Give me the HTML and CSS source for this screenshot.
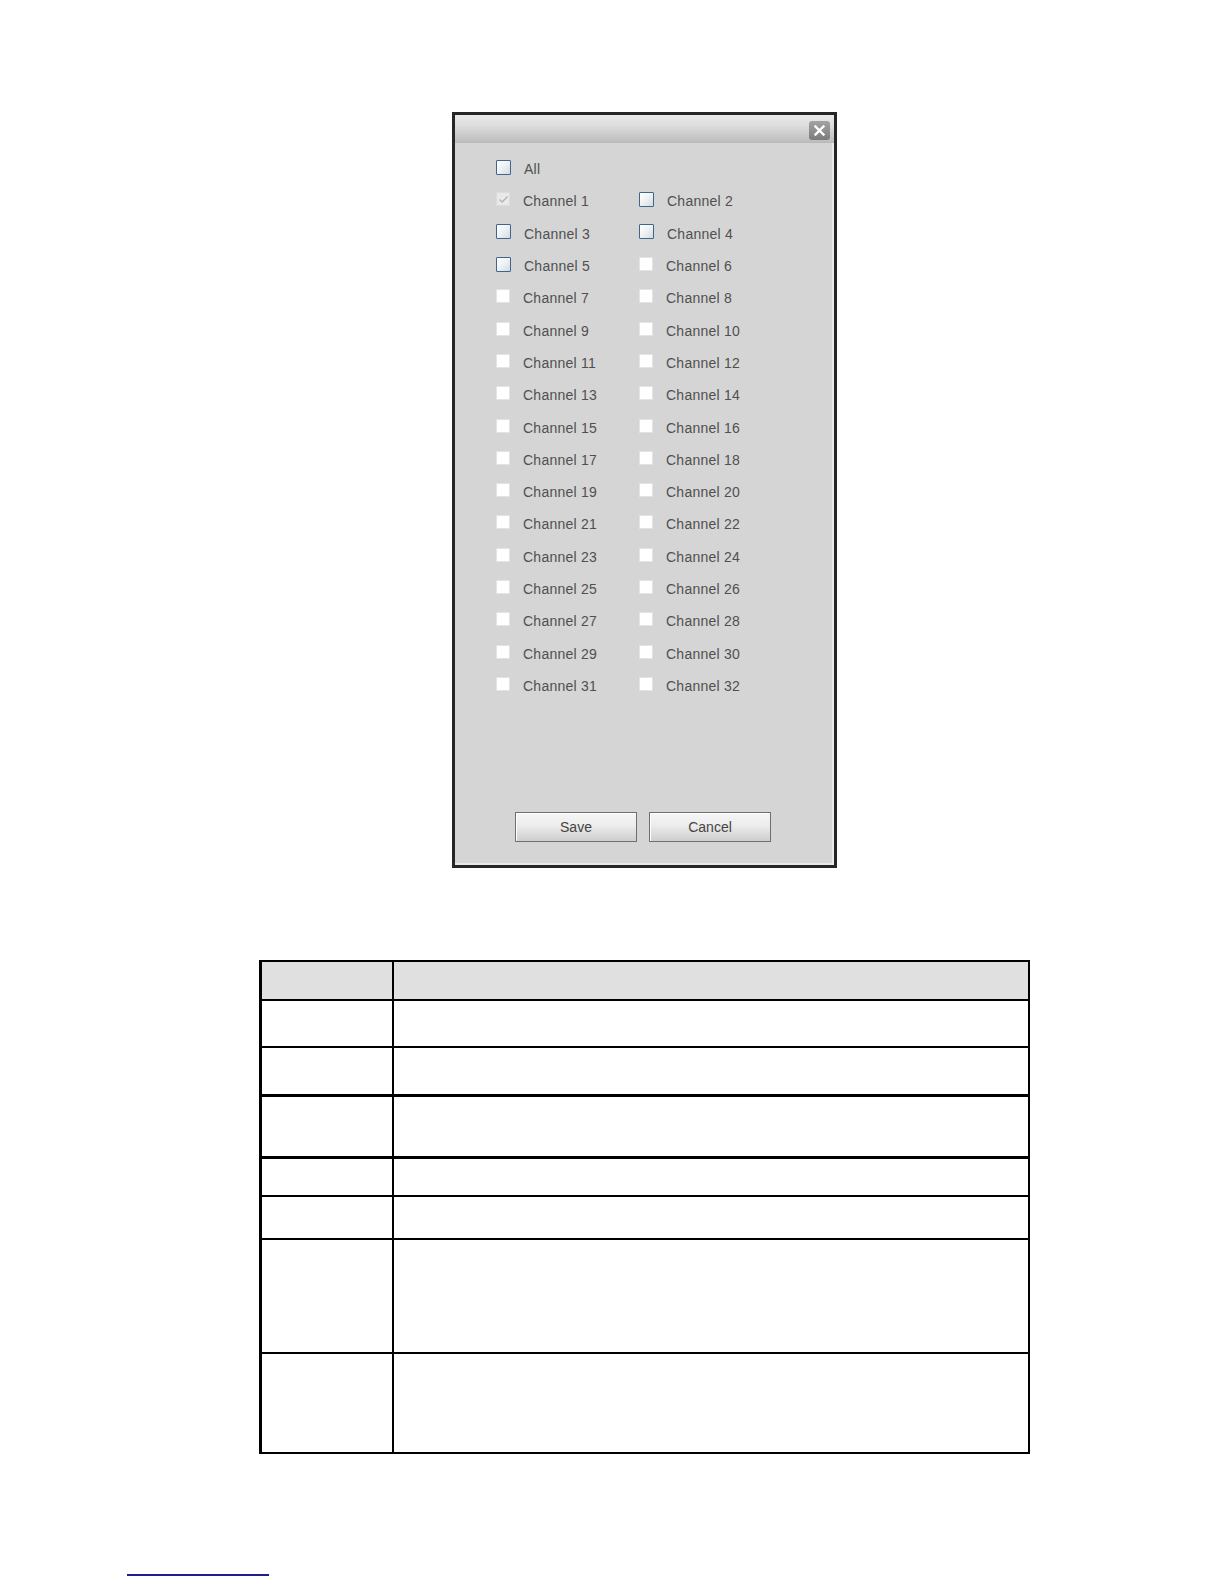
FILE: index.html
```html
<!DOCTYPE html>
<html>
<head>
<meta charset="utf-8">
<link rel="stylesheet" href="styles.css">
</head>
<body>
<div class="page">
  <div class="dialog">
    <div class="titlebar">
      <span class="close"><svg width="11" height="11" viewBox="0 0 11 11"><path d="M1.5 1.5 L9.5 9.5 M9.5 1.5 L1.5 9.5" stroke="#fff" stroke-width="2.4" stroke-linecap="square"/></svg></span>
    </div>
    <div class="body">
      <div class="grid">
        <label class="item"><span class="cb cb-blue"></span><span class="lbl">All</span></label>
        <span class="item"></span>
        <label class="item"><span class="cb cb-dis"><svg width="11" height="9" viewBox="0 0 11 9"><path d="M1.5 4.5 L4.2 7 L9.5 1.5" fill="none" stroke="#b4b4b4" stroke-width="1.4"/></svg></span><span class="lbl">Channel 1</span></label>
        <label class="item"><span class="cb cb-blue"></span><span class="lbl">Channel 2</span></label>
        <label class="item"><span class="cb cb-blue"></span><span class="lbl">Channel 3</span></label>
        <label class="item"><span class="cb cb-blue"></span><span class="lbl">Channel 4</span></label>
        <label class="item"><span class="cb cb-blue"></span><span class="lbl">Channel 5</span></label>
        <label class="item"><span class="cb"></span><span class="lbl">Channel 6</span></label>
        <label class="item"><span class="cb"></span><span class="lbl">Channel 7</span></label>
        <label class="item"><span class="cb"></span><span class="lbl">Channel 8</span></label>
        <label class="item"><span class="cb"></span><span class="lbl">Channel 9</span></label>
        <label class="item"><span class="cb"></span><span class="lbl">Channel 10</span></label>
        <label class="item"><span class="cb"></span><span class="lbl">Channel 11</span></label>
        <label class="item"><span class="cb"></span><span class="lbl">Channel 12</span></label>
        <label class="item"><span class="cb"></span><span class="lbl">Channel 13</span></label>
        <label class="item"><span class="cb"></span><span class="lbl">Channel 14</span></label>
        <label class="item"><span class="cb"></span><span class="lbl">Channel 15</span></label>
        <label class="item"><span class="cb"></span><span class="lbl">Channel 16</span></label>
        <label class="item"><span class="cb"></span><span class="lbl">Channel 17</span></label>
        <label class="item"><span class="cb"></span><span class="lbl">Channel 18</span></label>
        <label class="item"><span class="cb"></span><span class="lbl">Channel 19</span></label>
        <label class="item"><span class="cb"></span><span class="lbl">Channel 20</span></label>
        <label class="item"><span class="cb"></span><span class="lbl">Channel 21</span></label>
        <label class="item"><span class="cb"></span><span class="lbl">Channel 22</span></label>
        <label class="item"><span class="cb"></span><span class="lbl">Channel 23</span></label>
        <label class="item"><span class="cb"></span><span class="lbl">Channel 24</span></label>
        <label class="item"><span class="cb"></span><span class="lbl">Channel 25</span></label>
        <label class="item"><span class="cb"></span><span class="lbl">Channel 26</span></label>
        <label class="item"><span class="cb"></span><span class="lbl">Channel 27</span></label>
        <label class="item"><span class="cb"></span><span class="lbl">Channel 28</span></label>
        <label class="item"><span class="cb"></span><span class="lbl">Channel 29</span></label>
        <label class="item"><span class="cb"></span><span class="lbl">Channel 30</span></label>
        <label class="item"><span class="cb"></span><span class="lbl">Channel 31</span></label>
        <label class="item"><span class="cb"></span><span class="lbl">Channel 32</span></label>
      </div>
      <div class="buttons">
        <button class="btn">Save</button>
        <button class="btn">Cancel</button>
      </div>
    </div>
  </div>

  <table class="params">
    <tr class="head"><td class="c1"></td><td class="c2"></td></tr>
    <tr class="r1"><td></td><td></td></tr>
    <tr class="r2 thick"><td></td><td></td></tr>
    <tr class="r3 thick"><td></td><td></td></tr>
    <tr class="r4"><td></td><td></td></tr>
    <tr class="r5"><td></td><td></td></tr>
    <tr class="r6"><td></td><td></td></tr>
    <tr class="r7"><td></td><td></td></tr>
  </table>

  <div class="footer-line"></div>
</div>
</body>
</html>
```

FILE: styles.css
```css
html, body {
  margin: 0;
  padding: 0;
  background: #ffffff;
}

.page {
  width: 1224px;
  height: 1584px;
  position: relative;
  overflow: hidden;
  font-family: "Liberation Sans", Arial, sans-serif;
}

.dialog {
  box-sizing: border-box;
  margin-top: 112px;
  margin-left: 452px;
  width: 385px;
  height: 756px;
  border: 3px solid #262626;
  background: #d5d5d5;
  display: flex;
  flex-direction: column;
  box-shadow: inset -2px -2px 0 #e9e9e9;
}

.titlebar {
  height: 28px;
  flex: none;
  background: linear-gradient(#e9e9e9 0%, #dedede 35%, #c9c9c9 75%, #bababa 100%);
  display: flex;
  justify-content: flex-end;
  align-items: flex-start;
  padding: 6px 4px 0 0;
  box-sizing: border-box;
}

.close {
  width: 21px;
  height: 19px;
  border-radius: 3px;
  background: linear-gradient(#a3a3a3, #7c7c7c);
  display: flex;
  align-items: center;
  justify-content: center;
}

.body {
  flex: 1;
  display: flex;
  flex-direction: column;
  padding: 10px 0 23px 41px;
  box-sizing: border-box;
}

.grid {
  display: grid;
  grid-template-columns: 143px 143px;
  grid-auto-rows: 32.3px;
}

.item {
  display: flex;
  align-items: center;
}

.cb {
  box-sizing: border-box;
  width: 14px;
  height: 14px;
  flex: none;
  background: #ffffff;
  border: 1px solid #e4e4e4;
  margin-top: -4px;
  display: flex;
  align-items: center;
  justify-content: center;
}

.cb-blue {
  width: 15px;
  height: 15px;
  border: 1.5px solid #41658a;
  background: linear-gradient(135deg, #ffffff 0%, #eef1f4 50%, #d3dae2 100%);
  border-radius: 1px;
}

.cb-dis {
  background: #e9e9e9;
  border: 1px solid #dcdcdc;
}

.lbl {
  margin-left: 13px;
  font-size: 14px;
  letter-spacing: 0.25px;
  color: #505050;
  line-height: 16px;
}

.buttons {
  margin-top: auto;
  display: flex;
  gap: 12px;
  padding-left: 19px;
}

.btn {
  box-sizing: border-box;
  width: 122px;
  height: 30px;
  border: 1px solid #6f6f6f;
  background: linear-gradient(#f6f6f6 0%, #ececec 45%, #d6d6d6 85%, #cfcfcf 100%);
  box-shadow: inset 1px 1px 0 #ffffff;
  font-family: "Liberation Sans", Arial, sans-serif;
  font-size: 14px;
  color: #444444;
  padding: 0;
}

.params {
  margin-top: 92px;
  margin-left: 259px;
  width: 771px;
  border-collapse: collapse;
  border-left: 3px solid #000;
}

.params td {
  border: 2px solid #000;
  padding: 0;
}

.params .c1 {
  width: 130px;
}

.params .head td {
  background: #e0e0e0;
  height: 37px;
}

.params .r1 td { height: 45px; }
.params .r2 td { height: 46px; }
.params .r3 td { height: 59px; }
.params .r4 td { height: 36px; }
.params .r5 td { height: 41px; }
.params .r6 td { height: 112px; }
.params .r7 td { height: 98px; }

.params .thick td {
  border-bottom: 3px solid #000;
}

.params td:first-child {
  border-left: 3px solid #000;
}

.footer-line {
  margin-top: 120px;
  margin-left: 127px;
  width: 142px;
  height: 2px;
  background: #1e1e8c;
}
```
